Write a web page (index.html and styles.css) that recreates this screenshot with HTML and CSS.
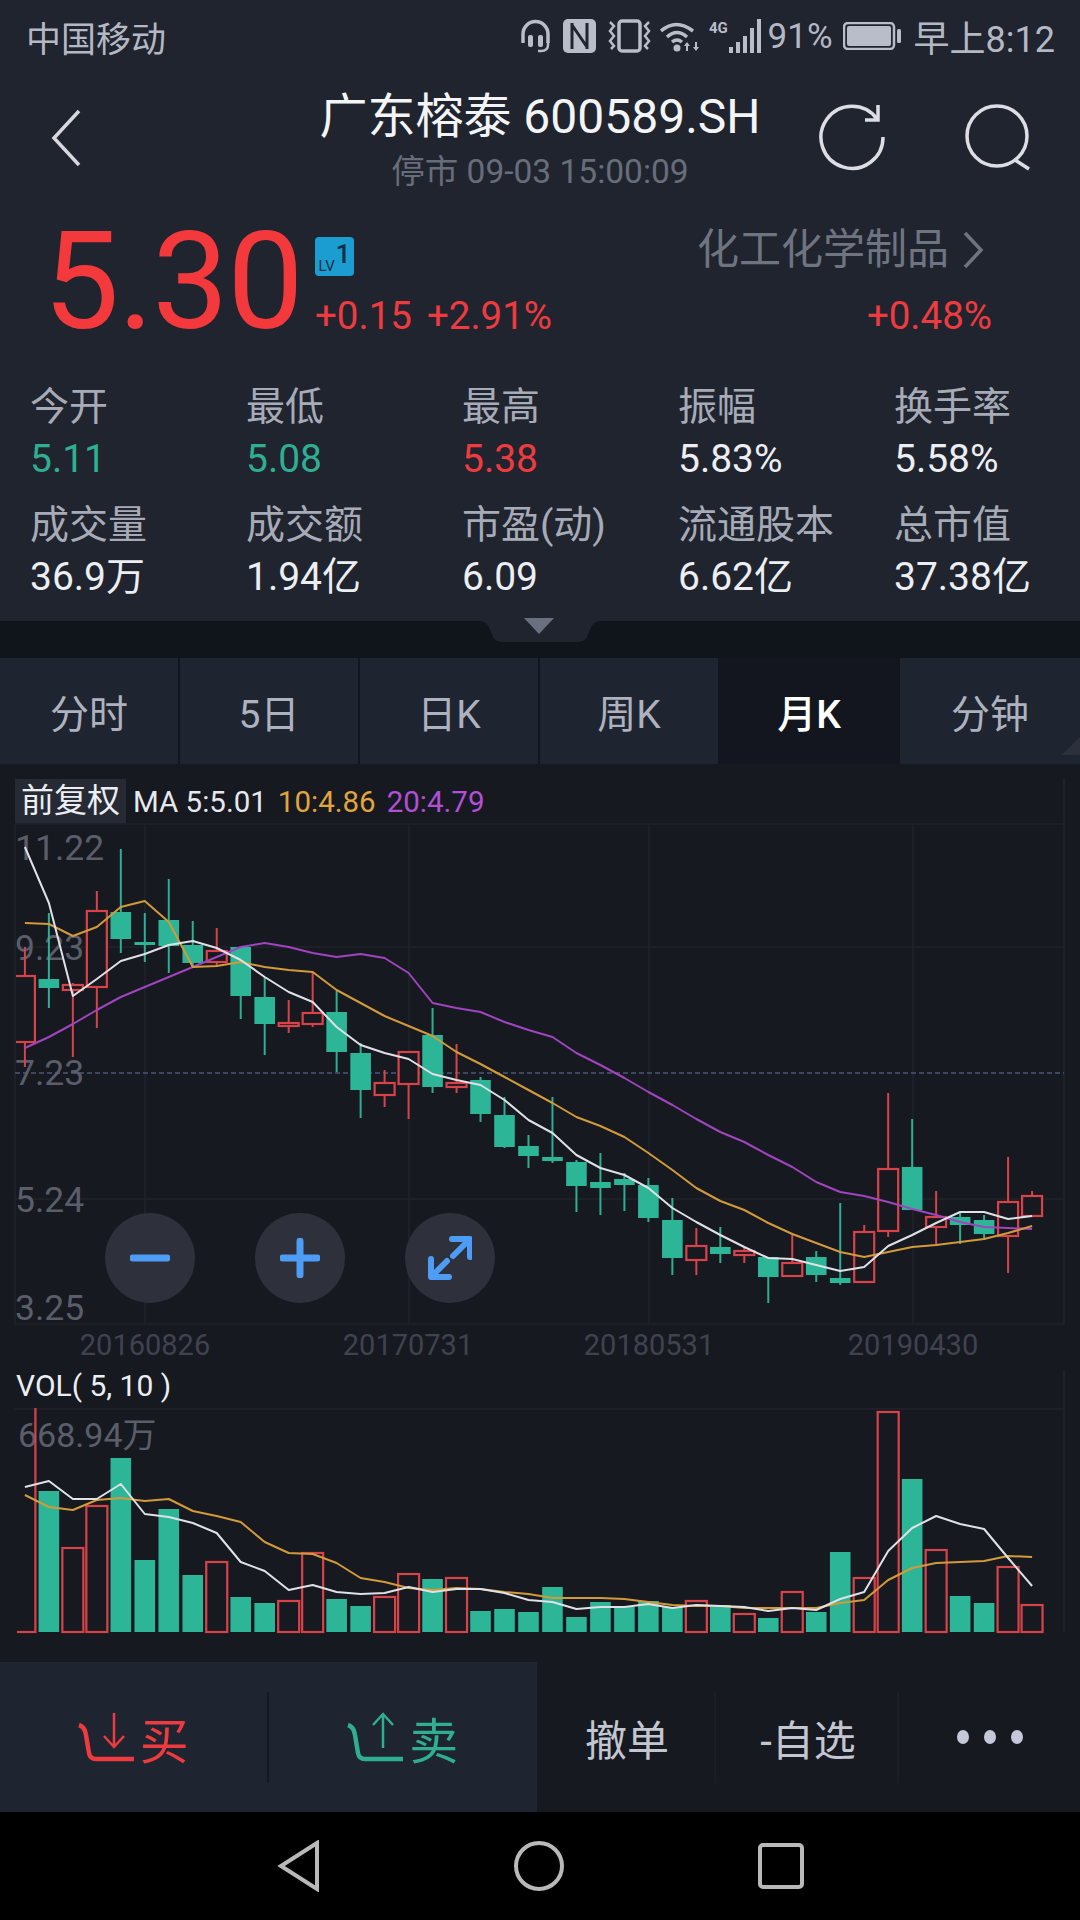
FILE: index.html
```html
<!DOCTYPE html>
<html lang="zh-CN">
<head>
    <meta charset="UTF-8">
    <meta name="viewport" content="width=device-width, initial-scale=1.0">
    <title>广东榕泰 600589.SH</title>
    <link rel="stylesheet" href="styles.css">
</head>
<body>
    <div class="status-bar">
        <span class="carrier">中国移动</span>
        <div class="status-right">
            <svg class="st-headset" viewBox="0 0 31 34"><path class="st-line" d="M3 24V15a12.500 12.500 0 0 1 25 0v9"/><rect class="st-fill" x="8" y="16" width="5" height="12" rx="2"/><rect class="st-fill" x="18" y="16" width="5" height="12" rx="2"/><path class="st-thin" d="M28 23v3q0 6-7 6h-3"/></svg>
            <svg class="st-nfc" viewBox="0 0 33 34"><rect class="st-fill" width="33" height="34" rx="5"/><path class="st-cut" d="M9 4v26M24 4v26M9 6l15 22"/></svg>
            <svg class="st-vibrate" viewBox="0 0 43 34"><rect class="st-line" x="11" y="2" width="21" height="30" rx="3"/><path class="st-thin" d="M2 3l4 4-4 5 4 5-4 5 4 5-3 3M41 3l-4 4 4 5-4 5 4 5-4 5 3 3"/></svg>
            <svg class="st-wifi" viewBox="0 0 40 32"><path class="st-line" d="M1 11q15-13 32 0M7 17q10-9 20 0M12 22q5-4 10 0"/><circle class="st-fill" cx="17" cy="28" r="3.500"/><path class="st-fill" d="M27 22l3 4h-2v5h-2v-5h-2zM36 31l3-4h-2v-5h-2v5h-2z"/></svg>
            <svg class="st-signal" viewBox="0 0 54 34"><text class="st-fourg" x="0" y="14">4G</text><path class="st-fill" d="M20 28h4v6h-4zM27 23h4v11h-4zM34 17h4v17h-4zM41 9h4v25h-4zM48 0h4v34h-4z"/></svg>
            <span class="battery-pct">91%</span>
            <svg class="st-battery" viewBox="0 0 60 28"><rect class="st-thin" x="1" y="1" width="50" height="26" rx="4"/><rect class="st-fill" x="4" y="4" width="44" height="20" rx="2"/><rect class="st-fill" x="54" y="7" width="4" height="14" rx="1.500"/></svg>
            <span class="clock">早上8:12</span>
        </div>
    </div>

    <header class="topbar">
        <div class="topbar-left">
            <svg class="back-icon" viewBox="0 0 30 58"><path d="M28 2L3 29l25 27"/></svg>
        </div>
        <div class="stock-title">
            <h1>广东榕泰 600589.SH</h1>
            <p>停市 09-03 15:00:09</p>
        </div>
        <div class="topbar-right">
            <svg class="head-icon" viewBox="0 0 70 68"><path d="M61 15A31 31 0 1 0 67 33"/><path d="M49 16h13V1"/></svg>
            <svg class="head-icon" viewBox="0 0 70 68"><circle cx="36" cy="32" r="30"/><path d="M54 56l14 9"/></svg>
        </div>
    </header>

    <section class="quote">
        <div class="price">5.30</div>
        <div class="price-side">
            <div class="level-badge"><span class="lv">LV</span><span class="lv-num">1</span></div>
            <div class="delta red"><span>+0.15</span><span>+2.91%</span></div>
        </div>
        <div class="sector">
            <div class="sector-name">化工化学制品<svg class="sector-arrow" viewBox="0 0 22 38"><path d="M3 2l16 17L3 36"/></svg></div>
            <div class="delta red">+0.48%</div>
        </div>
    </section>

    <section class="stats">
        <div class="stat"><span class="stat-label">今开</span><span class="stat-value green">5.11</span></div>
        <div class="stat"><span class="stat-label">最低</span><span class="stat-value green">5.08</span></div>
        <div class="stat"><span class="stat-label">最高</span><span class="stat-value red">5.38</span></div>
        <div class="stat"><span class="stat-label">振幅</span><span class="stat-value">5.83%</span></div>
        <div class="stat"><span class="stat-label">换手率</span><span class="stat-value">5.58%</span></div>
        <div class="stat"><span class="stat-label">成交量</span><span class="stat-value">36.9万</span></div>
        <div class="stat"><span class="stat-label">成交额</span><span class="stat-value">1.94亿</span></div>
        <div class="stat"><span class="stat-label">市盈(动)</span><span class="stat-value">6.09</span></div>
        <div class="stat"><span class="stat-label">流通股本</span><span class="stat-value">6.62亿</span></div>
        <div class="stat"><span class="stat-label">总市值</span><span class="stat-value">37.38亿</span></div>
    </section>

    <div class="fold-strip">
        <svg class="fold-handle" viewBox="0 0 120 26">
            <path class="fold-tab" d="M0 3h120q-8 1-10 9l-2 4q-2 8-10 8H22q-8 0-10-8l-2-4Q8 4 0 3z"/>
            <path class="fold-arrow" d="M44 0h30L59 16z"/>
        </svg>
    </div>

    <nav class="period-tabs">
        <div class="tab">分时</div>
        <div class="tab">5日</div>
        <div class="tab">日K</div>
        <div class="tab">周K</div>
        <div class="tab active">月K</div>
        <div class="tab tab-more">分钟</div>
    </nav>

    <section class="chart-panel">
        <svg id="kline" class="kline" viewBox="0 764 1080 898"></svg>
        <div class="legend">
            <span class="adjust-chip">前复权</span>
            <span class="ma ma-5">MA 5:5.01</span>
            <span class="ma ma-10">10:4.86</span>
            <span class="ma ma-20">20:4.79</span>
        </div>
        <div class="zoom-tools">
            <button class="zoom-btn"><svg viewBox="0 0 40 40"><path d="M3 20h34"/></svg></button>
            <button class="zoom-btn"><svg viewBox="0 0 40 40"><path d="M3 20h34M20 3v34"/></svg></button>
            <button class="zoom-btn"><svg class="expand-icon" viewBox="0 0 44 44"><path d="M24 3h18v18M37 8L25 20M3 23v18h18M8 36l11-11"/></svg></button>
        </div>
    </section>

    <footer class="order-bar">
        <div class="trade">
            <div class="trade-btn red">
                <svg class="trade-icon" viewBox="0 0 56 50"><path d="M1 13q6 2 7 10l3 18q1 6 7 6h38"/><path class="trade-arrow" d="M36 1v34M26 24l10 11 10-11"/></svg>
                <span>买</span>
            </div>
            <div class="trade-btn green">
                <svg class="trade-icon" viewBox="0 0 56 50"><path d="M1 13q6 2 7 10l3 18q1 6 7 6h38"/><path class="trade-arrow" d="M36 36V2M26 13L36 2l10 11"/></svg>
                <span>卖</span>
            </div>
        </div>
        <div class="actions">
            <div class="action">撤单</div>
            <div class="action">-自选</div>
            <div class="action"><span class="dots"><i></i><i></i><i></i></span></div>
        </div>
    </footer>

    <div class="system-nav">
        <svg class="sys-back" viewBox="0 0 44 52"><path d="M40 3L4 26l36 23z"/></svg>
        <svg class="sys-home" viewBox="0 0 52 52"><circle cx="26" cy="26" r="23"/></svg>
        <svg class="sys-recent" viewBox="0 0 48 48"><rect x="3" y="3" width="42" height="42" rx="3"/></svg>
    </div>

    <script src="chart.js"></script>
</body>
</html>
```

FILE: styles.css
```css
* {
    box-sizing: border-box;
}

body {
    margin: 0;
    width: 1080px;
    height: 1920px;
    overflow: hidden;
    display: flex;
    flex-direction: column;
    background: #20242f;
    color: #eceef2;
    font-family: Roboto, "Noto Sans CJK SC", sans-serif;
}

.red { color: #ee3b3f; }
.green { color: #2fae92; }

/* status bar */
.status-bar {
    height: 72px;
    padding: 0 25px 0 26px;
    display: flex;
    align-items: center;
    justify-content: space-between;
    font-size: 35px;
    color: #b4b8c4;
}

.status-right {
    display: flex;
    align-items: center;
}

.status-right svg {
    display: block;
    flex: none;
}

.st-headset { width: 31px; height: 34px; }
.st-nfc { width: 33px; height: 34px; margin-left: 12px; }
.st-vibrate { width: 43px; height: 34px; margin-left: 12px; }
.st-wifi { width: 40px; height: 32px; margin-left: 9px; }
.st-signal { width: 54px; height: 34px; margin-left: 9px; }
.st-battery { width: 60px; height: 28px; margin-left: 10px; }

.st-line { fill: none; stroke: #b9bdc9; stroke-width: 3.5; }
.st-thin { fill: none; stroke: #b9bdc9; stroke-width: 2.5; }
.st-fill { fill: #b9bdc9; }
.st-cut { fill: none; stroke: #20242f; stroke-width: 3; }
.st-fourg { fill: #b9bdc9; font-size: 15px; font-weight: 700; }

.battery-pct { margin-left: 5px; }
.clock { margin-left: 11px; font-size: 36px; }

/* title row */
.topbar {
    height: 130px;
    display: grid;
    grid-template-columns: 1fr auto 1fr;
}

.topbar-left {
    padding: 37px 0 0 51px;
}

.back-icon {
    width: 30px;
    height: 58px;
    display: block;
    fill: none;
    stroke: #d6d8de;
    stroke-width: 3.5;
}

.stock-title {
    text-align: center;
}

.stock-title h1 {
    margin: 20px 0 0;
    font-size: 48px;
    line-height: 50px;
    font-weight: 400;
    color: #f3f4f6;
}

.stock-title p {
    margin: 0;
    font-size: 33.500px;
    line-height: 60px;
    color: #686d7a;
}

.topbar-right {
    display: flex;
    justify-content: flex-end;
    gap: 75px;
    padding: 32px 49px 0 0;
}

.head-icon {
    width: 70px;
    height: 68px;
    display: block;
    fill: none;
    stroke: #dcdee3;
    stroke-width: 3.5;
}

/* last price */
.quote {
    height: 179px;
    display: flex;
}

.price {
    width: 315px;
    padding-left: 43px;
    font-size: 136px;
    line-height: 160px;
    letter-spacing: -1.5px;
    color: #f4393c;
    white-space: nowrap;
}

.price-side {
    padding-top: 35px;
}

.level-badge {
    width: 39px;
    height: 39px;
    border-radius: 4px;
    background: #1b9dd1;
    color: #12303f;
    display: flex;
    align-items: flex-end;
    justify-content: center;
    padding-bottom: 2px;
}

.lv {
    font-size: 15px;
    line-height: 16px;
}

.lv-num {
    font-size: 26px;
    line-height: 30px;
    font-weight: 500;
    margin: 0 0 5px 1px;
}

.delta {
    font-size: 38.500px;
    line-height: 40px;
    margin-top: 20px;
    display: flex;
    gap: 15px;
    white-space: nowrap;
}

.sector {
    margin-left: auto;
    padding: 23px 88px 0 0;
    display: flex;
    flex-direction: column;
    align-items: flex-end;
}

.sector .delta {
    margin-top: 21px;
}

.sector-name {
    font-size: 42px;
    line-height: 50px;
    color: #6f7481;
    display: flex;
    align-items: center;
    margin-right: 8px;
    white-space: nowrap;
}

.sector-arrow {
    width: 22px;
    height: 38px;
    margin-left: 13px;
    fill: none;
    stroke: #6f7481;
    stroke-width: 3.5;
}

/* open, low, high etc. */
.stats {
    display: grid;
    grid-template-columns: repeat(5, 216px);
    row-gap: 14px;
    padding: 0 0 18px 30px;
}

.stat {
    display: flex;
    flex-direction: column;
}

.stat-label {
    font-size: 39px;
    line-height: 52px;
    color: #a7abb7;
    white-space: nowrap;
}

.stat-value {
    font-size: 39px;
    line-height: 52px;
    white-space: nowrap;
}

.fold-strip {
    height: 37px;
    background: #10141b;
    position: relative;
}

.fold-handle {
    position: absolute;
    left: 480px;
    top: -3px;
    width: 120px;
    height: 26px;
}

.fold-tab { fill: #20242f; }
.fold-arrow { fill: #6b7080; }

/* period switcher */
.period-tabs {
    height: 106px;
    display: grid;
    grid-template-columns: repeat(6, 180px);
    background: #10141b;
}

.tab {
    background: #1f2431;
    border-right: 2px solid #13161e;
    display: flex;
    align-items: center;
    justify-content: center;
    font-size: 39px;
    color: #aeb2be;
}

.tab.active {
    background: #13161e;
    color: #fff;
    font-weight: 500;
}

.tab-more {
    border-right: 0;
    position: relative;
}

.tab-more::after {
    content: "";
    position: absolute;
    right: 0;
    bottom: 9px;
    border-style: solid;
    border-width: 0 0 18px 18px;
    border-color: transparent transparent #2c303c transparent;
}

/* k-line chart */
.chart-panel {
    height: 898px;
    position: relative;
    background: #161920;
}

.kline {
    display: block;
    width: 1080px;
    height: 898px;
}

.grid-line { stroke: #20232c; stroke-width: 1.5; }
.price-line { stroke: #3d4763; stroke-width: 2; stroke-dasharray: 5 3; }
.frame-line { stroke: #20242f; stroke-width: 1.5; }

.axis-label { fill: #5a5e6a; font-size: 35.500px; }
.vol-label { fill: #5a5e6a; font-size: 34px; }
.date-label { fill: #40434f; font-size: 29px; text-anchor: middle; }
.vol-title { fill: #eceef2; font-size: 30px; }

.wick-up { stroke: #d8434a; stroke-width: 2; }
.wick-down { stroke: #2fae92; stroke-width: 2; }
.body-up { fill: #161920; stroke: #d8434a; stroke-width: 2.2; }
.body-down { fill: #2cb596; }
.bar-up { fill: none; stroke: #d8434a; stroke-width: 2.2; }

.ma-line { fill: none; stroke-width: 2; stroke-linejoin: round; }
.ma-line-5 { stroke: #dfe1e7; }
.ma-line-10 { stroke: #d39a3a; }
.ma-line-20 { stroke: #a044bf; }

.legend {
    position: absolute;
    left: 15px;
    top: 15px;
    display: flex;
    align-items: center;
    font-size: 29.500px;
}

.adjust-chip {
    width: 111px;
    height: 44px;
    background: #262a35;
    font-size: 33px;
    line-height: 44px;
    text-align: center;
    margin-right: 7px;
    white-space: nowrap;
}

.ma { margin-right: 11px; padding-top: 1px; white-space: nowrap; }
.ma-5 { color: #e6e8ee; }
.ma-10 { color: #e0a53e; }
.ma-20 { color: #b24fd4; margin-right: 0; }

.zoom-tools {
    position: absolute;
    left: 105px;
    top: 449px;
    display: flex;
    gap: 60px;
}

.zoom-btn {
    width: 90px;
    height: 90px;
    padding: 0;
    border: 0;
    border-radius: 50%;
    background: #2e303b;
    display: flex;
    align-items: center;
    justify-content: center;
}

.zoom-btn svg {
    width: 40px;
    height: 40px;
    fill: none;
    stroke: #4d9cf5;
    stroke-width: 7;
    stroke-linecap: round;
    stroke-linejoin: round;
}

.zoom-btn .expand-icon {
    width: 44px;
    height: 44px;
    stroke-width: 6;
}

/* buy, sell and other actions */
.order-bar {
    height: 150px;
    display: flex;
    background: #161920;
}

.trade {
    width: 537px;
    display: grid;
    grid-template-columns: 1fr 1fr;
    align-items: center;
    background: #1f2431;
}

.trade-btn {
    height: 91px;
    display: flex;
    align-items: center;
    justify-content: center;
    gap: 6px;
    font-size: 49px;
}

.trade-btn:first-child {
    border-right: 2px solid #161922;
}

.trade-icon {
    width: 56px;
    height: 50px;
    fill: none;
    stroke: currentColor;
    stroke-width: 4.5;
}

.trade-arrow {
    stroke-width: 2.5;
}

.actions {
    flex: 1;
    display: grid;
    grid-template-columns: 179px 183px 181px;
    align-items: center;
}

.action {
    height: 91px;
    padding-left: 3px;
    display: flex;
    align-items: center;
    justify-content: center;
    font-size: 42px;
    color: #c3c6d0;
    border-right: 2px solid #1b1e27;
}

.action:last-child {
    padding-left: 0;
    border-right: 0;
}

.dots {
    display: flex;
    gap: 15px;
}

.dots i {
    width: 12px;
    height: 14px;
    border-radius: 50%;
    background: #c5c8d8;
}

/* android navigation */
.system-nav {
    height: 108px;
    background: #000;
    position: relative;
    display: flex;
    align-items: center;
    padding-left: 277px;
}

.system-nav svg {
    display: block;
    fill: none;
    stroke: #b9b9b9;
    stroke-width: 4;
}

.sys-back { width: 44px; height: 52px; }
.sys-home { width: 52px; height: 52px; margin-left: 192px; }
.sys-recent { width: 48px; height: 48px; margin-left: 192px; }
```

FILE: chart.js
```js
// Monthly k-line, drawn in page coordinates (the viewBox starts at y=764)
const SLOT = 23.98;
const LEFT = 24.9;

// [high, bodyTop, bodyBottom, low, direction] as pixel y values
const CANDLES = [
    [947, 976, 1042, 1067, 'up'], [913, 979, 988, 1008, 'down'], [983, 985, 990, 1057, 'up'],
    [891, 911, 987, 1028, 'up'], [849, 912, 939, 953, 'down'], [913, 942, 945, 962, 'down'],
    [879, 920, 946, 973, 'down'], [921, 945, 963, 967, 'down'], [928, 951, 962, 967, 'up'],
    [947, 947, 996, 1019, 'down'], [977, 997, 1024, 1055, 'down'], [1000, 1023, 1026, 1033, 'up'],
    [972, 1013, 1024, 1027, 'up'], [991, 1012, 1052, 1072, 'down'], [1043, 1053, 1090, 1118, 'down'],
    [1070, 1083, 1095, 1107, 'up'], [1052, 1052, 1084, 1119, 'up'], [1008, 1035, 1087, 1093, 'down'],
    [1044, 1083, 1087, 1093, 'up'], [1077, 1080, 1114, 1122, 'down'], [1097, 1115, 1147, 1148, 'down'],
    [1135, 1146, 1156, 1168, 'down'], [1097, 1157, 1161, 1163, 'down'], [1160, 1162, 1186, 1212, 'down'],
    [1153, 1182, 1188, 1215, 'down'], [1173, 1179, 1185, 1211, 'down'], [1178, 1185, 1218, 1222, 'down'],
    [1198, 1220, 1258, 1275, 'down'], [1228, 1246, 1260, 1275, 'up'], [1227, 1247, 1254, 1263, 'down'],
    [1247, 1251, 1255, 1263, 'up'], [1257, 1257, 1277, 1303, 'down'], [1233, 1263, 1276, 1276, 'up'],
    [1251, 1257, 1275, 1282, 'down'], [1203, 1278, 1283, 1285, 'down'], [1225, 1232, 1282, 1282, 'up'],
    [1093, 1169, 1231, 1237, 'up'], [1119, 1167, 1210, 1210, 'down'], [1191, 1217, 1227, 1246, 'up'],
    [1212, 1217, 1225, 1244, 'down'], [1215, 1220, 1234, 1240, 'down'], [1157, 1202, 1236, 1273, 'up'],
    [1191, 1196, 1216, 1216, 'up']
];

const MA5 = [847, 903, 996, 979, 961, 954, 945, 941, 948, 960, 977, 992, 1002, 1027, 1045, 1053, 1059, 1074, 1080, 1085, 1100, 1120,
    1133, 1155, 1168, 1175, 1188, 1208, 1222, 1235, 1247, 1258, 1259, 1265, 1271, 1267, 1246, 1235, 1223, 1212, 1212, 1219, 1216];
const MA10 = [923, 924, 936, 927, 907, 901, 922, 967, 966, 962, 967, 970, 972, 990, 1003, 1016, 1026, 1036, 1052, 1064, 1077, 1090,
    1103, 1117, 1126, 1137, 1153, 1170, 1188, 1201, 1210, 1223, 1234, 1243, 1252, 1257, 1252, 1247, 1245, 1242, 1239, 1233, 1226];
const MA20 = [1048, 1037, 1024, 1010, 997, 987, 977, 967, 957, 947, 943, 947, 953, 957, 954, 958, 973, 1003, 1008, 1012, 1022, 1030,
    1037, 1053, 1065, 1078, 1092, 1105, 1119, 1132, 1142, 1155, 1167, 1182, 1192, 1196, 1202, 1209, 1215, 1222, 1227, 1228, 1229];

// tops of the volume bars, the base sits at y=1632
const VOL_BASE = 1632;
const VOLUME = [1400, 1491, 1548, 1506, 1458, 1560, 1509, 1575, 1562, 1597, 1603, 1601, 1553, 1599, 1606, 1597, 1574, 1579, 1578, 1611, 1609, 1612,
    1587, 1617, 1602, 1607, 1601, 1607, 1601, 1605, 1614, 1618, 1592, 1612, 1552, 1578, 1412, 1479, 1550, 1596, 1603, 1567, 1605];
const VOL_MA5 = [1487, 1481, 1499, 1499, 1484, 1514, 1517, 1523, 1533, 1562, 1571, 1590, 1585, 1592, 1594, 1593, 1587, 1592, 1589, 1589, 1593, 1600,
    1602, 1609, 1607, 1607, 1604, 1608, 1605, 1606, 1607, 1611, 1608, 1610, 1599, 1592, 1551, 1528, 1516, 1524, 1529, 1558, 1586];
const VOL_MA10 = [1495, 1507, 1510, 1500, 1498, 1501, 1499, 1511, 1516, 1522, 1542, 1553, 1554, 1563, 1578, 1582, 1588, 1590, 1588, 1589, 1592, 1594,
    1598, 1598, 1598, 1599, 1602, 1605, 1606, 1606, 1608, 1608, 1608, 1608, 1603, 1600, 1580, 1568, 1563, 1562, 1561, 1556, 1557];

const slotX = i => LEFT + SLOT * i;

function hLine(y, x1, x2, cls) {
    return `<line class="${cls}" x1="${x1}" x2="${x2}" y1="${y}" y2="${y}"/>`;
}

function vLine(x, y1, y2, cls) {
    return `<line class="${cls}" x1="${x}" x2="${x}" y1="${y1}" y2="${y2}"/>`;
}

function label(text, x, y, cls) {
    return `<text class="${cls}" x="${x}" y="${y}">${text}</text>`;
}

function maPath(values, name) {
    const pts = values.map((y, i) => slotX(i).toFixed(1) + ',' + y).join(' ');
    return `<polyline class="ma-line ma-line-${name}" points="${pts}"/>`;
}

function drawGrid() {
    let out = '';
    [824, 947, 1199, 1324, 1409].forEach(y => { out += hLine(y, 15, 1064, 'grid-line'); });
    [145, 409, 649, 913].forEach(x => { out += vLine(x, 824, 1324, 'grid-line'); });
    out += vLine(15, 824, 1324, 'grid-line');
    out += vLine(1064, 778, 1324, 'frame-line');
    out += vLine(1064, 1370, 1632, 'frame-line');
    out += hLine(1073, 15, 1064, 'price-line');

    [['11.22', 860], ['9.23', 960], ['7.23', 1085], ['5.24', 1212], ['3.25', 1320]].forEach(([t, y]) => {
        out += label(t, 15, y, 'axis-label');
    });
    [['20160826', 145], ['20170731', 408], ['20180531', 649], ['20190430', 913]].forEach(([t, x]) => {
        out += label(t, x, 1355, 'date-label');
    });
    out += label('VOL( 5, 10 )', 16, 1396, 'vol-title');
    out += label('668.94万', 18, 1447, 'vol-label');
    return out;
}

function drawCandles() {
    let out = '';
    CANDLES.forEach(([high, top, bottom, low, dir], i) => {
        const x = slotX(i);
        out += vLine(x, high, low, 'wick-' + dir);
        if (dir === 'up') {
            out += `<rect class="body-up" x="${x - 10}" y="${top}" width="20" height="${bottom - top}"/>`;
        } else {
            out += `<rect class="body-down" x="${x - 10.3}" y="${top}" width="20.6" height="${bottom - top}"/>`;
        }
    });
    return out;
}

function drawVolume() {
    let out = '';
    VOLUME.forEach((top, i) => {
        const x = slotX(i);
        if (CANDLES[i][4] === 'up') {
            out += `<rect class="bar-up" x="${x - 10.5}" y="${top}" width="21" height="${VOL_BASE - top}"/>`;
        } else {
            out += `<rect class="body-down" x="${x - 10.3}" y="${top}" width="20.6" height="${VOL_BASE - top}"/>`;
        }
    });
    return out;
}

// the first bar runs off the plot, so each pane gets its own clip
document.getElementById('kline').innerHTML =
    '<defs><clipPath id="price-plot"><rect x="16" y="824" width="1048" height="500"/></clipPath>' +
    '<clipPath id="vol-plot"><rect x="17" y="1408" width="1047" height="230"/></clipPath></defs>' +
    drawGrid() +
    '<g clip-path="url(#price-plot)">' +
    drawCandles() +
    maPath(MA20, '20') + maPath(MA10, '10') + maPath(MA5, '5') +
    '</g><g clip-path="url(#vol-plot)">' +
    drawVolume() +
    maPath(VOL_MA10, '10') + maPath(VOL_MA5, '5') +
    '</g>';
```
